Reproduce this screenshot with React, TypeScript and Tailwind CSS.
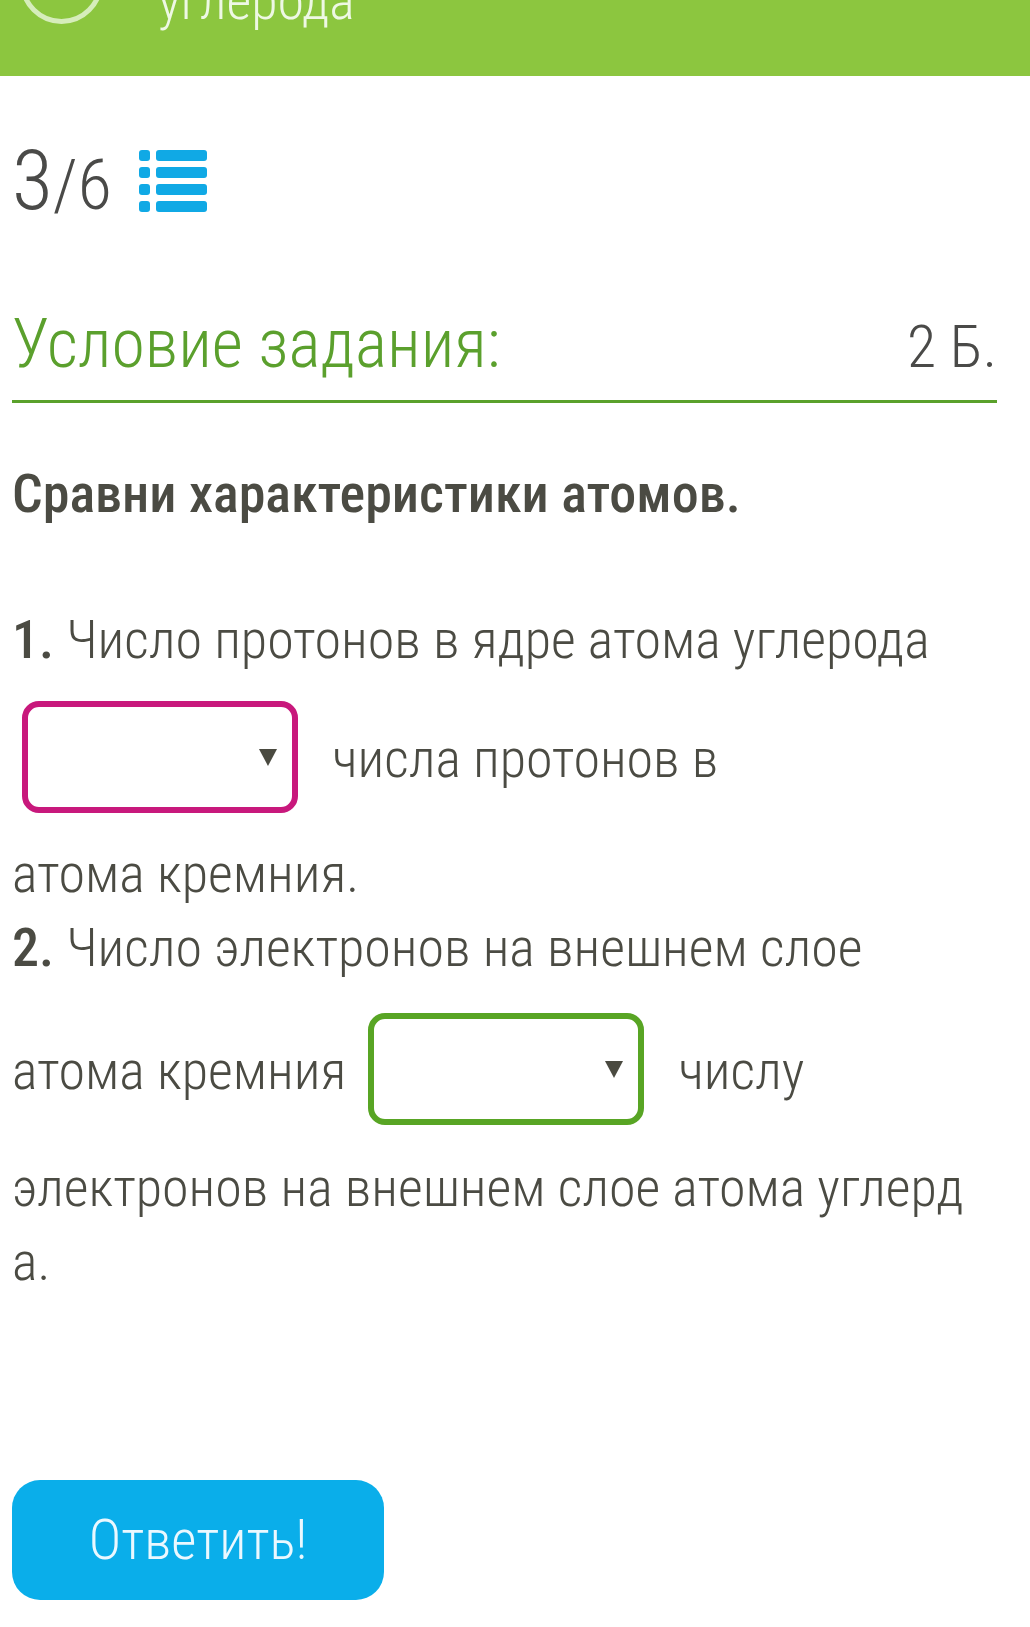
const font = "font-['Roboto','Liberation_Sans',sans-serif] [font-stretch:75%]";

function ListIcon() {
  const rows = [0, 17, 34, 51];
  return (
    <svg width="68" height="62" viewBox="0 0 68 62" className="shrink-0">
      {rows.map((y) => (
        <g key={y} fill="#10a9e5">
          <rect x="0" y={y} width="11" height="11" rx="3" />
          <rect x="17" y={y} width="51" height="11" rx="3" />
        </g>
      ))}
    </svg>
  );
}

// overflow-hidden makes the inline-block's baseline its bottom margin edge,
// so vertical-align can place it exactly against the text
function Dropdown({ color, place }: { color: string; place: string }) {
  return (
    <span
      className={`inline-block overflow-hidden w-[276px] h-[112px] ${place} ml-[10px] mr-[22px] rounded-[17px] border-[6px] bg-white`}
      style={{ borderColor: color }}
    >
      <span className="flex h-full items-center justify-end pr-[15px]">
        <svg width="18" height="17" viewBox="0 0 18 17">
          <path d="M0 0 H18 L9 17 Z" fill="#4a4a40" />
        </svg>
      </span>
    </span>
  );
}

export default function App() {
  return (
    <div className={`w-[1030px] min-h-[1627px] bg-white ${font}`}>
      {/* top bar, title cut off by the scroll */}
      <div className="h-[76px] bg-[#8cc63f] overflow-hidden flex items-start">
        <div className="ml-[20px] -mt-[59px] w-[83px] h-[83px] rounded-full border-[5px] border-[#d6edbb] shrink-0" />
        <div className="ml-[55px] -mt-[26px] text-[54px] leading-none font-light text-[#eef8e4]">
          углерода
        </div>
      </div>

      <div className="pl-[12px] pr-[33px]">
        {/* progress */}
        <div className="mt-[63px] flex items-end gap-[27px] text-[#4a4a48] font-light">
          <div className="leading-none flex items-baseline">
            <span className="text-[84px] leading-none">3</span>
            <span className="text-[70px] leading-none">/6</span>
          </div>
          <div className="mb-[11px]">
            <ListIcon />
          </div>
        </div>

        {/* task header */}
        <div className="mt-[87px] pb-[22px] border-b-[3px] border-[#5aa12b] flex justify-between items-baseline">
          <span className="text-[68px] leading-none font-light text-[#5ba02d]">Условие задания:</span>
          <span className="text-[60px] leading-none font-light text-[#4a4a48]">2 Б.</span>
        </div>

        <h2 className="mt-[64px] text-[54px] leading-none font-medium text-[#4b4b43]">
          Сравни характеристики атомов.
        </h2>

        <div className="mt-[82px] text-[54px] leading-[74px] font-light text-[#4b4b43] whitespace-nowrap">
          <div>
            <span className="font-medium">1.</span> Число протонов в ядре атома углерода
            <br />
            <Dropdown color="#c8187c" place="mt-[24px] mb-[24px] align-[-60px]" /> числа протонов в
            <br />
            атома кремния.
          </div>
          <div>
            <span className="font-medium">2.</span> Число электронов на внешнем слое
            <br />
            атома кремния <Dropdown color="#58a524" place="mt-[28px] mb-[26px] align-[-62px]" /> числу
            <br />
            электронов на внешнем слое атома углерд
            <br />
            а.
          </div>
        </div>

        <button className="mt-[181px] w-[372px] h-[120px] rounded-[28px] bg-[#0aaeea] text-[55px] leading-none font-light text-[#eaf8ff]">
          Ответить!
        </button>
      </div>
    </div>
  );
}
